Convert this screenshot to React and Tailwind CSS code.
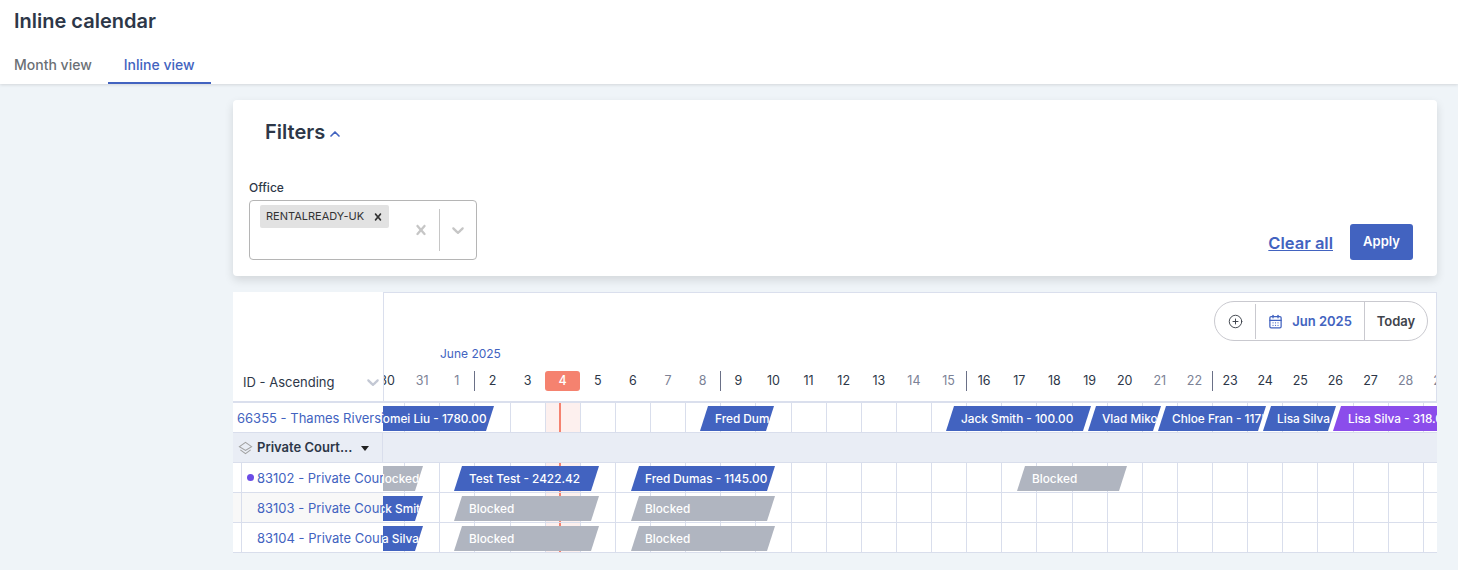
import React from 'react';
import { ChevronUp, CirclePlus, CalendarDays } from 'lucide-react';

const days = [
  30, 31, 1, 2, 3, 4, 5, 6, 7, 8, 9, 10, 11, 12, 13, 14, 15, 16, 17, 18, 19, 20, 21, 22, 23, 24, 25, 26, 27, 28, 29, 30,
];
const weekend = [31, 1, 7, 8, 14, 15, 21, 22, 28, 29];
const weekEnds = [1, 8, 15, 22];

// bar positions are x offsets from the left edge of the timeline
const BLUE = 'bg-[#4263c0]';
const GRAY = 'bg-[#b0b5c0]';
const PURPLE = 'bg-[#8b4deb]';

const topRow = [
  { left: -26, right: 111, label: 'Tomei Liu - 1780.00', color: BLUE, textLeft: 19 },
  { left: 317, right: 391, label: 'Fred Dumas - 1145.00', color: BLUE },
  { left: 563, right: 708, label: 'Jack Smith - 100.00', color: BLUE },
  { left: 705, right: 778, label: 'Vlad Mikovic - 450.00', color: BLUE, textLeft: 14 },
  { left: 775, right: 883, label: 'Chloe Fran - 1175.00', color: BLUE, textLeft: 14 },
  { left: 880, right: 953, label: 'Lisa Silva - 210.00', color: BLUE, textLeft: 14 },
  { left: 950, right: 1070, label: 'Lisa Silva - 318.00', color: PURPLE },
];

const units = [
  {
    id: '83102 - Private Court 1',
    dot: true,
    bars: [
      { left: -26, right: 40, label: 'Blocked', color: GRAY, textLeft: 17 },
      { left: 71, right: 216, label: 'Test Test - 2422.42', color: BLUE },
      { left: 248, right: 392, label: 'Fred Dumas - 1145.00', color: BLUE, textLeft: 14 },
      { left: 634, right: 744, label: 'Blocked', color: GRAY },
    ],
  },
  {
    id: '83103 - Private Court 2',
    shaded: true,
    bars: [
      { left: -26, right: 40, label: 'Jack Smith', color: BLUE, textLeft: 8 },
      { left: 71, right: 216, label: 'Blocked', color: GRAY },
      { left: 248, right: 392, label: 'Blocked', color: GRAY, textLeft: 14 },
    ],
  },
  {
    id: '83104 - Private Court 3',
    bars: [
      { left: -26, right: 40, label: 'Lisa Silva', color: BLUE, textLeft: 9 },
      { left: 71, right: 216, label: 'Blocked', color: GRAY },
      { left: 248, right: 392, label: 'Blocked', color: GRAY, textLeft: 14 },
    ],
  },
];

function SelectCross({ size, className }) {
  return (
    <svg viewBox="0 0 20 20" width={size} height={size} fill="currentColor" className={className}>
      <path d="M14.348 14.849c-0.469 0.469-1.229 0.469-1.697 0l-2.651-3.030-2.651 3.029c-0.469 0.469-1.229 0.469-1.697 0-0.469-0.469-0.469-1.229 0-1.697l2.758-3.15-2.759-3.152c-0.469-0.469-0.469-1.228 0-1.697s1.228-0.469 1.697 0l2.652 3.031 2.651-3.031c0.469-0.469 1.228-0.469 1.697 0s0.469 1.229 0 1.697l-2.758 3.152 2.758 3.15c0.469 0.469 0.469 1.229 0 1.698z" />
    </svg>
  );
}

function SelectChevron({ size, className }) {
  return (
    <svg viewBox="0 0 20 20" width={size} height={size} fill="currentColor" className={className}>
      <path d="M4.516 7.548c0.436-0.446 1.043-0.481 1.576 0l3.908 3.747 3.908-3.747c0.533-0.481 1.141-0.446 1.574 0 0.436 0.445 0.408 1.197 0 1.615-0.406 0.418-4.695 4.502-4.695 4.502-0.217 0.223-0.502 0.335-0.787 0.335s-0.57-0.112-0.789-0.335c0 0-4.287-4.084-4.695-4.502s-0.436-1.17 0-1.615z" />
    </svg>
  );
}

function Bar({ bar }) {
  return (
    <div
      className={`absolute top-[3px] z-10 h-[25px] overflow-hidden whitespace-nowrap text-[11.8px] font-medium leading-[26px] text-white [clip-path:polygon(8px_0,100%_0,calc(100%-8px)_100%,0_100%)] ${bar.color}`}
      style={{ left: bar.left, width: bar.right - bar.left, paddingLeft: bar.textLeft ?? 15 }}
    >
      {bar.label}
    </div>
  );
}

function TimelineRow({ bars }) {
  return (
    <div className="relative flex-1 overflow-hidden">
      <div className="flex h-full -ml-[13px]">
        {days.map((d, i) => (
          <div
            key={i}
            className={`h-full w-[35.14px] shrink-0 border-r border-[#d9deec] ${i === 5 ? 'bg-[#fdf0ee]' : ''}`}
          >
            {i === 5 && <div className="ml-[13px] h-full w-[2px] bg-[#f5826f]" />}
          </div>
        ))}
      </div>
      {bars.map((bar, i) => (
        <Bar key={i} bar={bar} />
      ))}
    </div>
  );
}

export default function App() {
  return (
    <div className="h-[570px] overflow-hidden bg-[#eff4f8] font-['Inter',sans-serif] text-[#2d3748]">
      <header className="h-[84px] bg-white px-[14px] pt-[9px] shadow-[0_1px_3px_rgba(0,0,0,0.12)]">
        <h1 className="text-[20px] font-semibold leading-[24px]">Inline calendar</h1>
        <nav className="mt-[19px] flex">
          <div className="h-[32px] pr-[16px] pt-[4px] text-[14px] font-medium leading-[18px] text-[#6b7075]">Month view</div>
          <div className="h-[32px] border-b-2 border-[#4263c0] px-[16px] pt-[4px] text-[14px] font-medium leading-[18px] text-[#4263c0]">
            Inline view
          </div>
        </nav>
      </header>

      <main className="pl-[233px] pr-[21px] pt-[16px]">
        <section className="h-[176px] rounded-[4px] bg-white shadow-[0_4px_10px_rgba(0,0,0,0.12)]">
          <div className="flex items-center pl-[32px] pt-[20px]">
            <h2 className="text-[20px] font-semibold leading-[24px]">Filters</h2>
            <ChevronUp size={16} strokeWidth={2.5} className="ml-[2px] mt-[3px] text-[#4263c0]" />
          </div>
          <div className="flex items-end justify-between pl-[16px] pr-[24px] pt-[36px]">
            <div>
              <div className="mb-[5px] text-[12px] font-medium leading-[15px]">Office</div>
              <div className="flex h-[60px] w-[228px] rounded-[4px] border border-[#b5b5b5]">
                <div className="flex-1 pl-[10px] pt-[4px]">
                  <div className="flex h-[23px] w-[129px] items-center rounded-[2px] bg-[#e2e2e2] pl-[6px] pr-[4px] text-[11px] text-[#333]">
                    RENTALREADY-UK
                    <SelectCross size={14} className="ml-auto" />
                  </div>
                </div>
                <div className="flex items-center pr-[8px] text-[#c6c6c6]">
                  <SelectCross size={20} />
                </div>
                <div className="my-[8px] w-px bg-[#c6c6c6]" />
                <div className="flex items-center px-[8px] text-[#c6c6c6]">
                  <SelectChevron size={20} />
                </div>
              </div>
            </div>
            <div className="flex items-center">
              <a className="mr-[17px] mt-[2px] text-[16.5px] font-semibold text-[#4263c0] underline">Clear all</a>
              <button className="h-[36px] w-[63px] rounded-[3px] bg-[#4263c0] text-[13px] font-semibold text-white">Apply</button>
            </div>
          </div>
        </section>

        <section className="mt-[16px]">
          {/* header */}
          <div className="flex h-[111px]">
            <div className="flex w-[150px] shrink-0 items-end justify-between border-b-2 border-[#dadfed] bg-white pb-[9px] pl-[10px] text-[13px] leading-[20px]">
              ID - Ascending
              <SelectChevron size={20} className="text-[#c3c8d4]" />
            </div>
            <div className="relative flex-1 overflow-hidden border border-b-2 border-[#dadfed] bg-white">
              <div className="flex justify-end pr-[8px] pt-[8px]">
                <div className="flex h-[40px] items-center rounded-full border border-[#c9c9cf] text-[13px] font-semibold">
                  <div className="flex w-[41px] justify-center border-r border-[#c9c9cf] py-[10px]">
                    <CirclePlus size={15} strokeWidth={1.5} className="text-[#3a3f47]" />
                  </div>
                  <div className="flex h-full w-[109px] items-center justify-center gap-[9px] border-r border-[#c9c9cf] pt-[2px] text-[#4263c0]">
                    <CalendarDays size={15} strokeWidth={2} className="-mt-[2px]" />
                    Jun 2025
                  </div>
                  <div className="w-[62px] text-center leading-[38px] text-[#3f444c]">Today</div>
                </div>
              </div>
              <div className="pl-[56px] pt-[6px] text-[12px] leading-[14px] text-[#4263c0]">June 2025</div>
              <div className="mt-[10px] flex -ml-[14.5px]">
                {days.map((d, i) => (
                  <div
                    key={i}
                    className={`h-[20px] w-[35.14px] shrink-0 text-center text-[12.5px] leading-[20px] ${
                      i === 5 ? 'rounded-[3px] bg-[#f5826f] font-medium text-white' : ''
                    } ${weekend.includes(d) && i !== 31 ? 'text-[#7c8296]' : ''} ${
                      weekEnds.includes(d) ? 'border-r border-[#6a7087]' : ''
                    }`}
                  >
                    {d}
                  </div>
                ))}
              </div>
            </div>
          </div>

          {/* property row */}
          <div className="flex h-[30px] border-b border-[#d9deec] bg-white">
            <div className="w-[150px] shrink-0 overflow-hidden whitespace-nowrap pl-[4px] text-[13px] leading-[30px] text-[#4263c0]">
              66355 - Thames Riverside Apartment
            </div>
            <TimelineRow bars={topRow} />
          </div>

          {/* group row */}
          <div className="flex h-[30px] items-center border-b border-[#d9deec] bg-[#e9edf5]">
            <div className="flex h-full w-[150px] items-center border-r border-[#d9deec] pl-[5px] pt-[1px] text-[13px] font-semibold">
              <svg viewBox="0 0 16 16" width={15} height={15} fill="none" stroke="#a0a0a0" strokeWidth="1.1">
                <path d="M8 1.5 14.5 6 8 10 1.5 6Z" />
                <path d="M2.5 9.5 8 13.5 13.5 9.5" />
              </svg>
              <span className="ml-[4px]">Private Court...</span>
              <svg viewBox="0 0 10 6" width={8} height={5} className="ml-[9px]" fill="#222">
                <path d="M0 0h10L5 6Z" />
              </svg>
            </div>
          </div>

          {/* unit rows */}
          {units.map((u) => (
            <div key={u.id} className="flex h-[30px] border-b border-[#d9deec] bg-white">
              <div className={`flex w-[150px] shrink-0 ${u.shaded ? 'bg-[#f8f8f8]' : ''}`}>
                <div className="w-[9px] shrink-0 border-r border-[#d9deec]" />
                <div className="flex w-[15px] shrink-0 items-center justify-center pl-[1px]">
                  {u.dot && <span className="h-[7px] w-[7px] rounded-full bg-[#6b4ce6]" />}
                </div>
                <div className="overflow-hidden whitespace-nowrap text-[13px] leading-[30px] text-[#4263c0]">{u.id}</div>
              </div>
              <TimelineRow bars={u.bars} />
            </div>
          ))}
        </section>
      </main>
    </div>
  );
}
